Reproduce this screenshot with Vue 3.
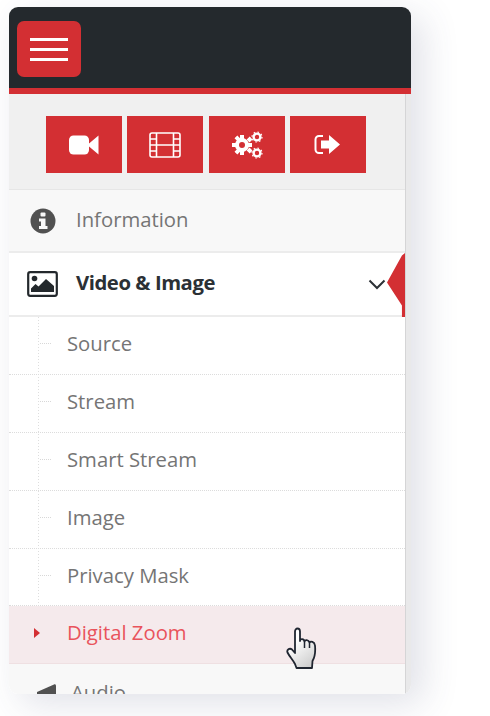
<script setup>
const subItems = ["Source", "Stream", "Smart Stream", "Image", "Privacy Mask", "Digital Zoom"];
</script>

<template>
  <main class="page">
    <div class="card">
      <header class="topbar">
        <button class="burger" aria-label="Menu">
          <span></span>
          <span></span>
          <span></span>
        </button>
      </header>

      <div class="body">
        <nav class="sidebar">
          <div class="shortcuts">
            <a class="shortcut">
              <svg width="30" height="20" viewBox="0 0 30 20">
                <rect x="0" y="0.5" width="20" height="19" rx="4.5" fill="#fff" />
                <path d="M20 8.5 29.5 0.5V19.5L20 11.5Z" fill="#fff" />
              </svg>
            </a>
            <a class="shortcut">
              <svg width="32" height="26" viewBox="0 0 32 26" fill="none" stroke="#fff" stroke-width="1.6">
                <rect x="1" y="1" width="30" height="24" rx="2" />
                <path d="M7.5 1V25M24.5 1V25M7.5 13H24.5" />
                <path d="M1 7H7.5M1 13H7.5M1 19H7.5M24.5 7H31M24.5 13H31M24.5 19H31" stroke-width="1.4" />
              </svg>
            </a>
            <a class="shortcut">
              <svg width="32" height="28" viewBox="0 0 32 28">
                <g fill="#fff">
                  <circle cx="11" cy="14" r="7" />
                  <path d="M9 4h4v4H9zM9 20h4v4H9zM1 12h4v4H1zM17 12h4v4h-4z" />
                  <path d="M3.5 7.2l2.8-2.8 3 3-2.8 2.8zM15.7 19.4l2.8-2.8 3 3-2.8 2.8zM3.5 20.8l3-3 2.8 2.8-3 3zM15.7 8.6l3-3 2.8 2.8-3 3z" />
                </g>
                <circle cx="11" cy="14" r="3" fill="#d32f33" />
                <g fill="none" stroke="#fff">
                  <circle cx="26" cy="6" r="3.4" stroke-width="2.4" />
                  <circle cx="26" cy="6" r="5" stroke-width="1.2" stroke-dasharray="1.6 2.3" />
                  <circle cx="26" cy="22" r="3.4" stroke-width="2.4" />
                  <circle cx="26" cy="22" r="5" stroke-width="1.2" stroke-dasharray="1.6 2.3" />
                </g>
              </svg>
            </a>
            <a class="shortcut">
              <svg width="27" height="21" viewBox="0 0 27 21">
                <path d="M9 2H5a3.5 3.5 0 0 0-3.5 3.5v10A3.500 3.500 0 0 0 5 19h4" fill="none" stroke="#fff" stroke-width="2" />
                <path d="M7 6.500H15V1L26 10.500 15 20V14.500H7Z" fill="#fff" />
              </svg>
            </a>
          </div>

          <a class="row info">
            <svg class="row-icon" width="26" height="26" viewBox="0 0 26 26">
              <circle cx="13" cy="13" r="12.500" fill="#515151" />
              <rect x="10.500" y="4.500" width="5" height="4" rx="1" fill="#f8f8f8" />
              <path d="M9 10.500H15.500V18H17.500V21H9V18H11V13.500H9Z" fill="#f8f8f8" />
            </svg>
            <span>Information</span>
          </a>

          <a class="row video">
            <svg class="row-icon" width="31" height="26" viewBox="0 0 31 26">
              <rect x="1.200" y="1.200" width="28.600" height="23.600" rx="2" fill="#fff" stroke="#23282c" stroke-width="2.200" />
              <circle cx="7.500" cy="7.500" r="2.800" fill="#23282c" />
              <path d="M4 21V17.500L8.500 13 11.500 15.500 19 8 27 15V21Z" fill="#23282c" />
            </svg>
            <span>Video &amp; Image</span>
            <svg class="chevron" width="18" height="11" viewBox="0 0 18 11">
              <path d="M1.500 1.500 9 9 16.500 1.500" fill="none" stroke="#2c3136" stroke-width="2" />
            </svg>
            <i class="marker"></i>
          </a>

          <ul class="submenu">
            <li
              v-for="item in subItems"
              :key="item"
              class="sub"
              :class="{ active: item === 'Digital Zoom' }"
            >
              {{ item }}
            </li>
          </ul>

          <a class="row audio">
            <svg class="audio-icon" width="19" height="26" viewBox="0 0 19 26">
              <path d="M0 9 17 1.500C18 1 19 1.500 19 3V26H0Z" fill="#515151" />
            </svg>
            <span>Audio</span>
          </a>
        </nav>
        <div class="scrollbar"></div>
      </div>

      <svg class="cursor" width="32" height="43" viewBox="0 0 32 43">
        <defs>
          <linearGradient id="hand" x1="0.300" y1="0.300" x2="0.700" y2="1">
            <stop offset="0" stop-color="#fff" />
            <stop offset="1" stop-color="#cfcfcf" />
          </linearGradient>
        </defs>
        <path
          d="M9 4.500C9 .5 14 .5 14 4.500V14C14 11.500 18 11.500 18.500 14.500 19 12.500 22.500 12.500 23.500 15.500 24.500 14 28.500 14.500 29 18.500 29.500 24 29 30 26.500 34L26 41H10.500L9 37C7 33 3.500 29.500 1.500 25.500 .5 23 3.500 20.500 6 22.500L9 26Z"
          fill="url(#hand)"
          stroke="#1f2530"
          stroke-width="1.800"
          stroke-linejoin="round"
        />
        <path d="M18.500 14.500V21M23.500 15.500V21" stroke="#1f2530" stroke-width="1.500" fill="none" />
      </svg>
    </div>
  </main>
</template>

<style scoped>
.page {
  width: 490px;
  height: 716px;
  padding: 7px 79px 22px 9px;
  box-sizing: border-box;
  background: #fff;
  font-family: "Open Sans", "Liberation Sans", sans-serif;
}
.card {
  position: relative;
  height: 687px;
  display: flex;
  flex-direction: column;
  border-radius: 9px;
  overflow: hidden;
  box-shadow: 12px 10px 36px rgba(60, 70, 110, 0.16);
}
.topbar {
  height: 87px;
  flex: none;
  box-sizing: border-box;
  background: #24292d;
  border-bottom: 6px solid #d32f33;
  padding: 14px 8px 0 8px;
}
.burger {
  display: flex;
  flex-direction: column;
  align-items: center;
  justify-content: center;
  gap: 7px;
  width: 64px;
  height: 56px;
  padding: 0;
  border: 0;
  border-radius: 7px;
  background: #d32f33;
}
.burger span {
  display: block;
  width: 38px;
  height: 3px;
  background: #fff;
}
.body {
  flex: 1;
  display: flex;
  min-height: 0;
}
.sidebar {
  flex: 1;
  min-width: 0;
  overflow: hidden;
  background: #fff;
}
.scrollbar {
  width: 6px;
  flex: none;
  background: #e9e9ea;
  border-left: 1px solid #d5d5d6;
  box-sizing: border-box;
}
.shortcuts {
  height: 96px;
  box-sizing: border-box;
  display: flex;
  justify-content: center;
  gap: 5.300px;
  padding-top: 22px;
  padding-right: 2px;
  background: #f0f0f0;
  border-bottom: 1px solid #e6e6e6;
}
.shortcut {
  width: 76px;
  height: 57px;
  display: flex;
  align-items: center;
  justify-content: center;
  background: #d32f33;
}
.row {
  display: flex;
  align-items: center;
  position: relative;
  box-sizing: border-box;
  font-size: 20.300px;
  border-bottom: 2px solid #ececec;
}
.row-icon {
  flex: none;
}
.info {
  height: 63px;
  padding-left: 21px;
  background: #f8f8f8;
  color: #757575;
}
.info span {
  margin-left: 20px;
  margin-top: -3px;
}
.video {
  height: 64px;
  padding-left: 18px;
  background: #fff;
  color: #2b3035;
  font-weight: 700;
  letter-spacing: -0.450px;
}
.video span {
  margin-left: 18px;
  margin-top: -4px;
}
.chevron {
  position: absolute;
  right: 19px;
  top: 26px;
}
.marker {
  position: absolute;
  right: 0;
  top: 0;
  width: 18px;
  height: 64px;
  background: #d32f33;
  clip-path: polygon(100% 0, 100% 100%, 83% 100%, 83% 82%, 0 46%, 83% 4%);
}
.submenu {
  list-style: none;
  margin: 0;
  padding: 0;
  background-image: repeating-linear-gradient(to bottom, #dedede 0 1px, transparent 1px 3px);
  background-size: 1px 100%;
  background-position: 29px 0;
  background-repeat: no-repeat;
}
.sub {
  position: relative;
  height: 57.900px;
  box-sizing: border-box;
  padding: 9px 0 0 58px;
  font-size: 20.300px;
  line-height: 34px;
  color: #757575;
  border-bottom: 1px dotted #dcdcdc;
}
.sub::before {
  content: "";
  position: absolute;
  left: 31px;
  top: 26px;
  width: 11px;
  border-top: 1px dotted #d8d8d8;
}
.sub.active {
  color: #e9545c;
  background: #f5eaec;
  border-bottom: 1px solid #efe0e2;
}
.sub.active::before {
  left: 25px;
  top: 22px;
  width: 0;
  border-top: 5px solid transparent;
  border-bottom: 5px solid transparent;
  border-left: 6px solid #d32f33;
}
.audio {
  height: 60px;
  padding-left: 28px;
  background: #f8f8f8;
  color: #757575;
  border-bottom: 0;
  align-items: flex-start;
}
.audio-icon {
  margin-top: 19px;
}
.audio span {
  margin-left: 15px;
  margin-top: 14px;
}
.cursor {
  position: absolute;
  left: 277px;
  top: 620px;
}
</style>

<style>
html,
body {
  margin: 0;
  background: #fff;
}
</style>
